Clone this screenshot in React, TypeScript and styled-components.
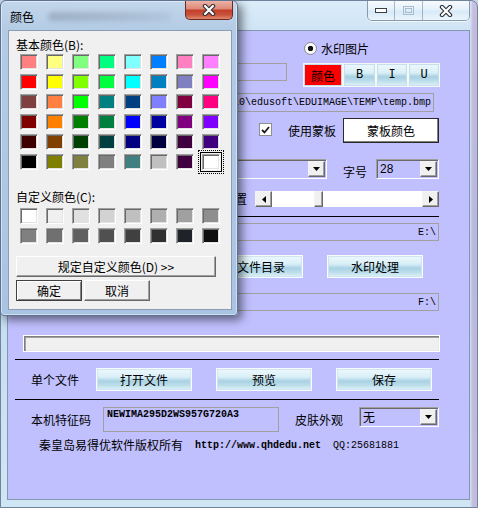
import React from "react";
import styled, { createGlobalStyle } from "styled-components";

const CJK = `"Noto Sans CJK SC", "Liberation Sans", sans-serif`;
const MONO = `"Liberation Mono", "DejaVu Sans Mono", monospace`;

const GlobalStyle = createGlobalStyle`
  *, *::before, *::after { box-sizing: border-box; }
  html, body { margin: 0; padding: 0; }
  body {
    width: 478px; height: 508px; overflow: hidden;
    background: #c6d4ea;
    font-family: ${CJK};
    font-size: 12px;
    color: #000;
  }
`;

const Desktop = styled.div`
  position: relative;
  width: 478px;
  height: 508px;
  overflow: hidden;
`;

/* ---------- window frames ---------- */

const MainWindow = styled.div`
  position: absolute;
  left: 0;
  top: 0;
  width: 478px;
  height: 508px;
  border: 1px solid #71839b;
  border-radius: 7px 7px 0 0;
  padding: 0 7px 7px 6px;
  display: flex;
  flex-direction: column;
  background:
    linear-gradient(90deg, rgba(0,0,0,0) 0, rgba(0,0,0,0) 469px, rgba(190,150,200,0.55) 472px, rgba(170,150,205,0.5) 476px),
    linear-gradient(180deg, #dcedf9 0, #cfe4f5 28px, #c2dbf0 50%, #cfe6f4 100%);
`;

const TitleBar = styled.div`
  flex: none;
  height: 29px;
  display: flex;
  justify-content: flex-end;
  align-items: flex-start;
`;

const CaptionGroup = styled.div`
  display: flex;
  border: 1px solid rgba(70, 90, 115, 0.55);
  border-top: none;
  border-radius: 0 0 5px 5px;
  overflow: hidden;
  box-shadow: 0 1px 0 rgba(255, 255, 255, 0.7);
`;

const CaptionButton = styled.div<{ $w: number }>`
  width: ${(p) => p.$w}px;
  height: 19px;
  display: flex;
  align-items: center;
  justify-content: center;
  background: linear-gradient(180deg, rgba(255,255,255,0.75) 0, rgba(236,246,252,0.55) 48%, rgba(214,232,246,0.55) 52%, rgba(240,248,253,0.8) 100%);
  & + & {
    border-left: 1px solid rgba(70, 90, 115, 0.4);
  }
`;

const Client = styled.div`
  flex: 1;
  background: #c0c0ff;
  border: 1px solid #8796b0;
  display: flex;
  flex-direction: column;
  padding-right: 30px;
`;

const Dialog = styled.div`
  position: absolute;
  left: 0;
  top: 0;
  width: 238px;
  height: 316px;
  border: 1px solid #5d7392;
  border-radius: 6px 6px 4px 4px;
  padding: 0 5px 5px 7px;
  display: flex;
  flex-direction: column;
  background: linear-gradient(180deg, #c3d6ea 0, #b3cbe5 30px, #a9c4e3 100%);
  box-shadow: 4px 4px 10px rgba(0, 0, 0, 0.5), inset 0 0 0 1px rgba(255, 255, 255, 0.45);
`;

const DialogTitleBar = styled.div`
  flex: none;
  height: 29px;
  display: flex;
  align-items: flex-start;
`;

const DialogTitle = styled.span`
  flex: none;
  padding: 7px 0 0 2px;
  font-size: 12px;
  color: #000;
`;

const GlassSmudge = styled.div`
  flex: 1;
  height: 9px;
  margin: 11px 14px 0 14px;
  border-radius: 5px;
  background: linear-gradient(90deg, rgba(80,90,110,0.28), rgba(80,90,110,0.18) 60%, rgba(80,90,110,0.08));
  filter: blur(2.5px);
`;

const RedClose = styled.div`
  flex: none;
  width: 48px;
  height: 19px;
  margin-right: -1px;
  display: flex;
  align-items: center;
  justify-content: center;
  border: 1px solid #6b2a22;
  border-top: none;
  border-radius: 0 0 5px 5px;
  background: linear-gradient(180deg, #ecb3a6 0, #dd8a79 42%, #c4402b 52%, #c9533e 78%, #e08c6f 100%);
`;

const DialogClient = styled.div`
  flex: 1;
  background: #f0f0f0;
  border: 1px solid #8a9cb6;
  padding: 7px 0 0 7px;
  display: flex;
  flex-direction: column;
`;

/* ---------- dialog parts ---------- */

const DLabel = styled.div<{ $mt?: number }>`
  margin-top: ${(p) => p.$mt ?? 0}px;
  height: 14px;
  line-height: 14px;
  font-size: 12px;
  white-space: nowrap;
`;

const SwatchGrid = styled.div<{ $mt: number }>`
  margin: ${(p) => p.$mt}px 0 0 4px;
  display: grid;
  grid-template-columns: repeat(8, 18px);
  grid-auto-rows: 16px;
  column-gap: 8px;
  row-gap: 4px;
`;

const Swatch = styled.div<{ $c: string; $sel?: boolean }>`
  background: ${(p) => p.$c};
  border: 1px solid;
  border-color: #a0a0a0 #ffffff #ffffff #a0a0a0;
  box-shadow: inset 1px 1px 0 #696969, inset -1px -1px 0 #e3e3e3
    ${(p) => (p.$sel ? ", 0 0 0 1px #f0f0f0, 0 0 0 2px #000" : "")};
  outline: ${(p) => (p.$sel ? "1px dotted #000" : "none")};
  outline-offset: 3px;
`;

const WideButton = styled.div`
  margin-top: 12px;
  width: 200px;
  height: 21px;
  display: flex;
  align-items: center;
  justify-content: center;
  background: #f0f0f0;
  border: 1px solid;
  border-color: #ffffff #696969 #696969 #ffffff;
  box-shadow: inset -1px -1px 0 #a0a0a0;
  font-size: 12px;
  white-space: nowrap;
`;

const DialogButtons = styled.div`
  margin-top: 3px;
  display: flex;
  gap: 2px;
`;

const DlgButton = styled.div<{ $default?: boolean }>`
  width: 66px;
  height: 21px;
  display: flex;
  align-items: center;
  justify-content: center;
  background: #f0f0f0;
  border: 1px solid;
  border-color: ${(p) => (p.$default ? "#404040" : "#ffffff #696969 #696969 #ffffff")};
  box-shadow: ${(p) =>
    p.$default
      ? "inset 1px 1px 0 #ffffff, inset -1px -1px 0 #808080"
      : "inset -1px -1px 0 #a0a0a0"};
  font-size: 12px;
`;

/* ---------- main window parts ---------- */

const Row = styled.div<{ $mt: number; $h: number; $pl?: number; $align?: string }>`
  flex: none;
  display: flex;
  align-items: ${(p) => p.$align ?? "center"};
  margin-top: ${(p) => p.$mt}px;
  height: ${(p) => p.$h}px;
  padding-left: ${(p) => p.$pl ?? 0}px;
`;

const Spacer = styled.span<{ $w: number }>`
  flex: none;
  width: ${(p) => p.$w}px;
`;

const Label = styled.span<{ $w?: number; $ml?: number; $mt?: number; $right?: boolean }>`
  flex: none;
  width: ${(p) => (p.$w ? `${p.$w}px` : "auto")};
  margin-left: ${(p) => p.$ml ?? 0}px;
  margin-top: ${(p) => p.$mt ?? 0}px;
  text-align: ${(p) => (p.$right ? "right" : "left")};
  line-height: 16px;
  font-size: 12px;
  white-space: nowrap;
`;

const Mono = styled.span<{ $ml?: number; $bold?: boolean }>`
  flex: none;
  margin-left: ${(p) => p.$ml ?? 0}px;
  font-family: ${MONO};
  font-size: 10px;
  font-weight: ${(p) => (p.$bold ? "bold" : "normal")};
  white-space: nowrap;
`;

const TextBox = styled.div<{ $w?: number; $h?: number; $ml?: number; $code?: boolean }>`
  flex: ${(p) => (p.$w ? "none" : "1")};
  width: ${(p) => (p.$w ? `${p.$w}px` : "auto")};
  height: ${(p) => p.$h ?? 18}px;
  margin-left: ${(p) => p.$ml ?? 0}px;
  align-self: flex-start;
  border: 1px solid #a0a0a0;
  background: #c0c0ff;
  display: flex;
  align-items: ${(p) => (p.$code ? "flex-start" : "center")};
  justify-content: ${(p) => (p.$code ? "flex-start" : "flex-end")};
  padding: ${(p) => (p.$code ? "1px 3px" : "0 2px")};
  overflow: hidden;
  font-family: ${MONO};
  font-size: 10px;
  font-weight: ${(p) => (p.$code ? "bold" : "normal")};
  white-space: nowrap;
`;

const ColorButton = styled.div`
  flex: none;
  width: 40px;
  height: 24px;
  display: flex;
  align-items: center;
  justify-content: center;
  background: #ff0000;
  border: 1px solid #f4f8fb;
  box-shadow: inset 0 0 0 1px #c8dce8;
  font-size: 12px;
`;

const StyleButton = styled.div<{ $w: number }>`
  flex: none;
  width: ${(p) => p.$w}px;
  height: 24px;
  display: flex;
  align-items: center;
  justify-content: center;
  border: 1px solid #f4f8fb;
  box-shadow: inset 0 0 0 1px #c6dfea;
  background: linear-gradient(180deg, #eef8fc 0, #d9eff7 40%, #a8d1e2 58%, #bcdeeb 78%, #e3f3f9 100%);
  font-family: ${MONO};
  font-size: 12px;
`;

const SkinButton = styled.div<{ $ml?: number }>`
  flex: none;
  width: 96px;
  height: 23px;
  margin-left: ${(p) => p.$ml ?? 0}px;
  display: flex;
  align-items: center;
  justify-content: center;
  border: 1px solid #f8fcfd;
  box-shadow: inset 0 0 0 1px #cfe6f0;
  background: linear-gradient(180deg, #eef8fc 0, #d9eff7 38%, #a9d2e3 58%, #bcdeeb 78%, #e3f3f9 100%);
  font-size: 12px;
  white-space: nowrap;
`;

const WhiteButton = styled.div`
  flex: none;
  margin-left: auto;
  width: 96px;
  height: 25px;
  display: flex;
  align-items: center;
  justify-content: center;
  background: #ffffff;
  border: 1px solid #2a2a2a;
  box-shadow: inset -1px -1px 0 #808080;
  font-size: 12px;
`;

const RadioItem = styled.div`
  flex: none;
  display: flex;
  align-items: center;
  gap: 4px;
  font-size: 12px;
`;

const RadioDot = styled.span<{ $on?: boolean }>`
  flex: none;
  width: 13px;
  height: 13px;
  border-radius: 50%;
  border: 1px solid #8a8a8a;
  background: ${(p) =>
    p.$on
      ? "radial-gradient(circle, #111 0, #111 2.4px, #f6f6f6 3px, #ffffff 100%)"
      : "#ffffff"};
`;

const CheckBox = styled.span`
  flex: none;
  width: 13px;
  height: 13px;
  margin-top: 5px;
  border: 1px solid #8e8f8f;
  background: #ffffff;
  display: flex;
  align-items: center;
  justify-content: center;
`;

const Combo = styled.div<{ $w?: number; $ml?: number; $auto?: boolean }>`
  flex: ${(p) => (p.$w ? "none" : "1")};
  width: ${(p) => (p.$w ? `${p.$w}px` : "auto")};
  height: 20px;
  margin-left: ${(p) => (p.$auto ? "auto" : `${p.$ml ?? 0}px`)};
  align-self: flex-start;
  border: 1px solid;
  border-color: #a0a0a0 #ffffff #ffffff #a0a0a0;
  box-shadow: inset 1px 1px 0 #696969;
  background: #c0c0ff;
  display: flex;
  align-items: center;
  padding: 1px 1px 1px 2px;
  font-size: 12px;
`;

const ComboText = styled.span<{ $sans?: boolean }>`
  flex: 1;
  padding-left: 1px;
  font-family: ${(p) => (p.$sans ? `"Liberation Sans", sans-serif` : CJK)};
  font-size: 12px;
  line-height: 16px;
`;

const ArrowButton = styled.span`
  flex: none;
  width: 17px;
  height: 16px;
  display: flex;
  align-items: center;
  justify-content: center;
  background: #f0f0f0;
  border: 1px solid;
  border-color: #f4f4f4 #696969 #696969 #f4f4f4;
  box-shadow: inset -1px -1px 0 #a0a0a0;
`;

const ScrollBar = styled.div`
  flex: none;
  width: 184px;
  height: 16px;
  margin-left: 8px;
  display: flex;
  background: #ffffff;
`;

const TrackGap = styled.span<{ $w?: number }>`
  flex: ${(p) => (p.$w !== undefined ? `0 0 ${p.$w}px` : "1")};
`;

const Thumb = styled.span`
  flex: 0 0 9px;
  height: 16px;
  background: #f0f0f0;
  border: 1px solid;
  border-color: #f4f4f4 #696969 #696969 #f4f4f4;
  box-shadow: inset -1px -1px 0 #a0a0a0;
`;

const Rule = styled.div<{ $mt: number }>`
  flex: none;
  margin: ${(p) => p.$mt}px 0 0 7px;
  height: 1px;
  background: #000;
`;

const Progress = styled.div`
  flex: none;
  width: 417px;
  height: 17px;
  margin-left: 15px;
  border: 1px solid #ffffff;
  box-shadow: inset 1px 1px 0 #808080, inset 2px 2px 0 #a0a0a0, inset -1px -1px 0 #e8e8e8;
  background: #f0f0f0;
`;

/* ---------- icons ---------- */

const CloseGlyph = () => (
  <svg width="14" height="12" viewBox="0 0 14 12">
    <path d="M3 2 L11 10 M11 2 L3 10" stroke="#2d3238" strokeWidth="4.4" strokeLinecap="round" />
    <path d="M3 2 L11 10 M11 2 L3 10" stroke="#ffffff" strokeWidth="2.2" strokeLinecap="round" />
  </svg>
);

const MinGlyph = () => (
  <svg width="12" height="6" viewBox="0 0 12 6">
    <rect x="0.5" y="0.5" width="11" height="4" fill="#ffffff" stroke="#3a4048" />
  </svg>
);

const MaxGlyph = () => (
  <svg width="11" height="9" viewBox="0 0 11 9">
    <rect x="0.5" y="0.5" width="10" height="8" fill="none" stroke="#a9bccf" />
    <rect x="2.5" y="2.5" width="6" height="4" fill="none" stroke="#a9bccf" />
  </svg>
);

const Down = () => (
  <svg width="7" height="4" viewBox="0 0 7 4">
    <polygon points="0,0 7,0 3.5,4" fill="#000" />
  </svg>
);

const LeftTri = () => (
  <svg width="4" height="7" viewBox="0 0 4 7">
    <polygon points="4,0 4,7 0,3.5" fill="#000" />
  </svg>
);

const RightTri = () => (
  <svg width="4" height="7" viewBox="0 0 4 7">
    <polygon points="0,0 0,7 4,3.5" fill="#000" />
  </svg>
);

const Check = () => (
  <svg width="9" height="8" viewBox="0 0 9 8">
    <path d="M1 4 L3.5 6.5 L8 1" stroke="#1a1a1a" strokeWidth="1.8" fill="none" />
  </svg>
);

/* ---------- data ---------- */

const BASIC = [
  "#FF8080", "#FFFF80", "#80FF80", "#00FF80", "#80FFFF", "#0080FF", "#FF80C0", "#FF80FF",
  "#FF0000", "#FFFF00", "#80FF00", "#00FF40", "#00FFFF", "#0080C0", "#8080C0", "#FF00FF",
  "#804040", "#FF8040", "#00FF00", "#008080", "#004080", "#8080FF", "#800040", "#FF0080",
  "#800000", "#FF8000", "#008000", "#008040", "#0000FF", "#0000A0", "#800080", "#8000FF",
  "#400000", "#804000", "#004000", "#004040", "#000080", "#000040", "#400040", "#400080",
  "#000000", "#808000", "#808040", "#808080", "#408080", "#C0C0C0", "#400040", "#FFFFFF",
];

const CUSTOM = [
  "#ffffff", "#f0f0f0", "#e0e0e0", "#d3d3d3", "#c0c0c0", "#afafaf", "#a0a0a0", "#8f8f8f",
  "#808080", "#707070", "#606060", "#505050", "#404040", "#303030", "#20222a", "#101010",
];

/* ---------- app ---------- */

export default function App() {
  return (
    <Desktop>
      <GlobalStyle />
      <MainWindow>
        <TitleBar>
          <CaptionGroup>
            <CaptionButton $w={26}>
              <MinGlyph />
            </CaptionButton>
            <CaptionButton $w={28}>
              <MaxGlyph />
            </CaptionButton>
            <CaptionButton $w={47}>
              <CloseGlyph />
            </CaptionButton>
          </CaptionGroup>
        </TitleBar>

        <Client>
          <Row $mt={9} $h={16} $pl={296}>
            <RadioItem>
              <RadioDot $on />
              水印图片
            </RadioItem>
          </Row>

          <Row $mt={7} $h={24} $pl={70} $align="flex-start">
            <TextBox $w={209} />
            <Spacer $w={16} />
            <ColorButton>颜色</ColorButton>
            <StyleButton $w={33}>B</StyleButton>
            <StyleButton $w={32}>I</StyleButton>
            <StyleButton $w={32}>U</StyleButton>
          </Row>

          <Row $mt={6} $h={19} $pl={70} $align="flex-start">
            <TextBox $w={356} $h={19}>D:\Program Files\EDU2010\edusoft\EDUIMAGE\TEMP\temp.bmp</TextBox>
          </Row>

          <Row $mt={6} $h={25} $pl={251} $align="flex-start">
            <CheckBox>
              <Check />
            </CheckBox>
            <Label $ml={16} $mt={5}>
              使用蒙板
            </Label>
            <WhiteButton>蒙板颜色</WhiteButton>
          </Row>

          <Row $mt={16} $h={19} $pl={60} $align="flex-start">
            <Combo $w={259}>
              <ComboText>宋体</ComboText>
              <ArrowButton>
                <Down />
              </ArrowButton>
            </Combo>
            <Label $ml={16} $mt={5}>
              字号
            </Label>
            <Combo $w={63} $auto>
              <ComboText $sans>28</ComboText>
              <ArrowButton>
                <Down />
              </ArrowButton>
            </Combo>
          </Row>

          <Row $mt={13} $h={16} $pl={10}>
            <Label $w={229} $right>
              水印位置
            </Label>
            <ScrollBar>
              <ArrowButton>
                <LeftTri />
              </ArrowButton>
              <TrackGap $w={42} />
              <Thumb />
              <TrackGap />
              <ArrowButton>
                <RightTri />
              </ArrowButton>
            </ScrollBar>
          </Row>

          <Rule $mt={9} />

          <Row $mt={6} $h={18} $pl={70}>
            <TextBox>E:\</TextBox>
          </Row>

          <Row $mt={14} $h={23} $pl={199}>
            <SkinButton>源文件目录</SkinButton>
            <SkinButton $ml={24}>水印处理</SkinButton>
          </Row>

          <Row $mt={15} $h={18} $pl={70}>
            <TextBox>F:\</TextBox>
          </Row>

          <Row $mt={24} $h={17}>
            <Progress />
          </Row>

          <Rule $mt={7} />

          <Row $mt={8} $h={23} $pl={23}>
            <Label $w={65}>单个文件</Label>
            <SkinButton>打开文件</SkinButton>
            <SkinButton $ml={24}>预览</SkinButton>
            <SkinButton $ml={24}>保存</SkinButton>
          </Row>

          <Rule $mt={8} />

          <Row $mt={7} $h={25} $pl={23}>
            <Label $w={72}>本机特征码</Label>
            <TextBox $w={176} $h={25} $code>
              NEWIMA295D2WS957G720A3
            </TextBox>
            <Label $ml={16}>皮肤外观</Label>
            <Combo $w={80} $auto>
              <ComboText>无</ComboText>
              <ArrowButton>
                <Down />
              </ArrowButton>
            </Combo>
          </Row>

          <Row $mt={6} $h={14} $pl={31}>
            <Label>秦皇岛易得优软件版权所有</Label>
            <Mono $ml={12} $bold>
              http://www.qhdedu.net
            </Mono>
            <Mono $ml={12}>QQ:25681881</Mono>
          </Row>
        </Client>
      </MainWindow>

      <Dialog>
        <DialogTitleBar>
          <DialogTitle>颜色</DialogTitle>
          <GlassSmudge />
          <RedClose>
            <CloseGlyph />
          </RedClose>
        </DialogTitleBar>
        <DialogClient>
          <DLabel>基本颜色(B):</DLabel>
          <SwatchGrid $mt={2}>
            {BASIC.map((c, i) => (
              <Swatch key={i} $c={c} $sel={i === BASIC.length - 1} />
            ))}
          </SwatchGrid>
          <DLabel $mt={20}>自定义颜色(C):</DLabel>
          <SwatchGrid $mt={4}>
            {CUSTOM.map((c, i) => (
              <Swatch key={i} $c={c} />
            ))}
          </SwatchGrid>
          <WideButton>规定自定义颜色(D) &gt;&gt;</WideButton>
          <DialogButtons>
            <DlgButton $default>确定</DlgButton>
            <DlgButton>取消</DlgButton>
          </DialogButtons>
        </DialogClient>
      </Dialog>
    </Desktop>
  );
}
